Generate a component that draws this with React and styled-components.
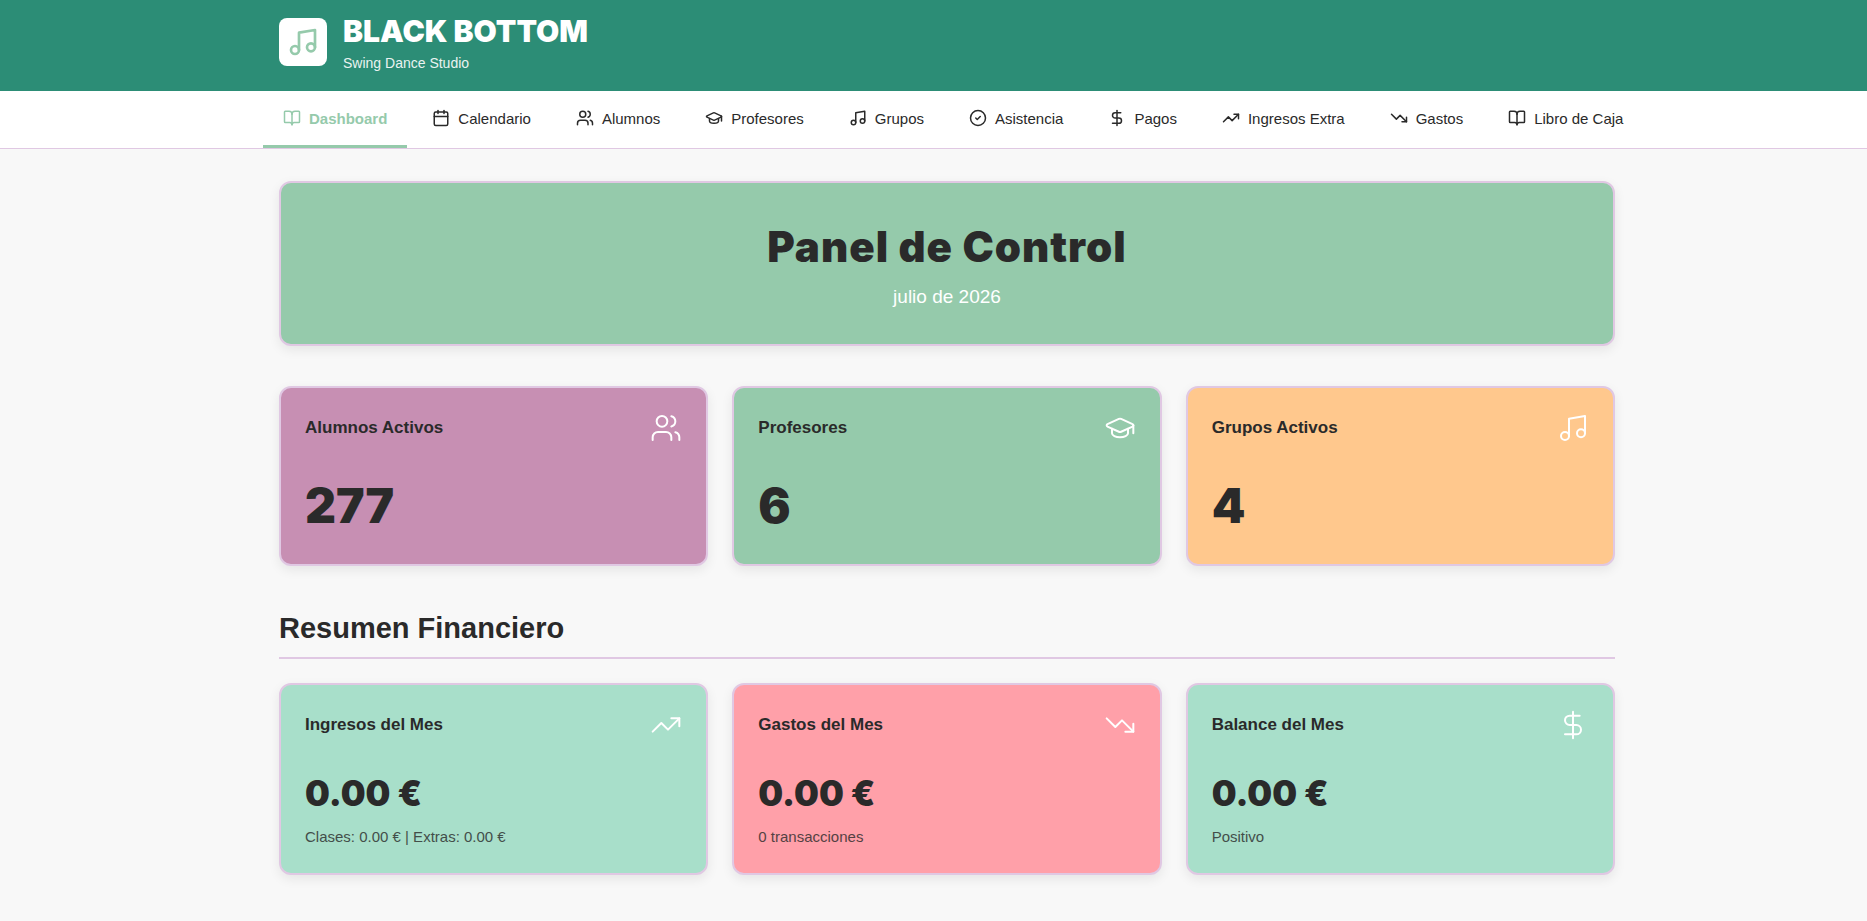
import React from 'react';
import styled, { createGlobalStyle } from 'styled-components';
import {
  BookOpen,
  Calendar,
  CircleCheck,
  DollarSign,
  GraduationCap,
  Music,
  TrendingDown,
  TrendingUp,
  Users,
} from 'lucide-react';

const color = {
  brand: '#2c8d76',
  green: '#95caab',
  purple: '#c78fb3',
  orange: '#ffc88d',
  mint: '#a8dfca',
  pink: '#ffa0a9',
  line: '#e0c8e3',
  ink: '#2a2a2a',
};

const displayFont = "'Arial Black', Inter, 'Liberation Sans', sans-serif";

const GlobalStyle = createGlobalStyle`
  *, *::before, *::after { box-sizing: border-box; }
  body {
    margin: 0;
    background: #f8f8f8;
    color: ${color.ink};
    font-family: 'Liberation Sans', Arial, sans-serif;
    font-size: 15px;
  }
  h1, h2, h3, p { margin: 0; }
`;

const Page = styled.div`
  min-height: 100vh;
`;

const Band = styled.div`
  padding-left: 27px;
`;

const HeaderBand = styled(Band).attrs({ as: 'header' })`
  background: ${color.brand};
`;

const NavBand = styled(Band).attrs({ as: 'nav' })`
  background: #fff;
  border-bottom: 1px solid ${color.line};
`;

const Brand = styled.div`
  display: flex;
  align-items: center;
  gap: 16px;
  max-width: 1400px;
  margin: 0 auto;
  padding: 10px 32px 17px;
  color: #fff;
`;

const Logo = styled.div`
  display: grid;
  place-items: center;
  width: 48px;
  height: 48px;
  border-radius: 8px;
  background: #fff;
  color: ${color.green};
`;

const BrandName = styled.h1`
  font: 900 30px/42px ${displayFont};
`;

const Tagline = styled.p`
  font-size: 14px;
  line-height: 22px;
  opacity: 0.9;
`;

const NavList = styled.div`
  display: flex;
  gap: 5px;
  max-width: 1400px;
  margin: 0 auto;
  padding: 0 16px;
`;

const NavButton = styled.button`
  display: flex;
  align-items: center;
  flex-shrink: 0;
  gap: 8px;
  height: 57px;
  padding: 0 20px;
  border: 0;
  border-bottom: 3px solid ${(p) => (p.$active ? color.green : 'transparent')};
  background: none;
  color: ${(p) => (p.$active ? color.green : color.ink)};
  font-family: inherit;
  font-size: 15px;
  font-weight: ${(p) => (p.$active ? 700 : 400)};
  white-space: nowrap;
  cursor: pointer;
`;

const Main = styled.main`
  max-width: 1400px;
  margin: 0 auto;
  padding: 32px;
`;

const Panel = styled.section`
  border: 2px solid ${color.line};
  border-radius: 12px;
  background: ${(p) => color[p.$tone]};
  box-shadow: 0 4px 12px rgba(0, 0, 0, 0.08);
`;

const Hero = styled(Panel)`
  margin-bottom: 40px;
  padding: 32px;
  text-align: center;
`;

const HeroTitle = styled.h2`
  margin-bottom: 2px;
  font: 900 42px/64px ${displayFont};
  letter-spacing: 1px;
`;

const HeroDate = styled.p`
  color: #fff;
  font-size: 19px;
  line-height: 31px;
`;

const CardGrid = styled.div`
  display: grid;
  grid-template-columns: repeat(3, 1fr);
  gap: 24px;
`;

const Card = styled(Panel)`
  padding: 24px;
`;

const CardHead = styled.div`
  display: flex;
  align-items: center;
  justify-content: space-between;
  margin-bottom: 24px;

  svg { color: #fff; }
`;

const CardTitle = styled.h3`
  font-size: 17px;
  line-height: 32px;
`;

const Count = styled.p`
  padding-top: 4px;
  font: 900 48px/68px ${displayFont};
`;

const Amount = styled.p`
  margin-bottom: 4px;
  font: 900 35px/56px ${displayFont};
`;

const Note = styled.p`
  line-height: 24px;
  opacity: 0.8;
`;

const SectionTitle = styled.h2`
  margin: 40px 0 24px;
  padding-bottom: 7px;
  border-bottom: 2px solid ${color.line};
  font-size: 29px;
  line-height: 44px;
`;

const navItems = [
  ['Dashboard', BookOpen],
  ['Calendario', Calendar],
  ['Alumnos', Users],
  ['Profesores', GraduationCap],
  ['Grupos', Music],
  ['Asistencia', CircleCheck],
  ['Pagos', DollarSign],
  ['Ingresos Extra', TrendingUp],
  ['Gastos', TrendingDown],
  ['Libro de Caja', BookOpen],
];

const counts = [
  { title: 'Alumnos Activos', value: '277', tone: 'purple', Icon: Users },
  { title: 'Profesores', value: '6', tone: 'green', Icon: GraduationCap },
  { title: 'Grupos Activos', value: '4', tone: 'orange', Icon: Music },
];

const finances = [
  { title: 'Ingresos del Mes', value: '0.00 €', note: 'Clases: 0.00 € | Extras: 0.00 €', tone: 'mint', Icon: TrendingUp },
  { title: 'Gastos del Mes', value: '0.00 €', note: '0 transacciones', tone: 'pink', Icon: TrendingDown },
  { title: 'Balance del Mes', value: '0.00 €', note: 'Positivo', tone: 'mint', Icon: DollarSign },
];

function StatCard({ title, tone, Icon, children }) {
  return (
    <Card $tone={tone}>
      <CardHead>
        <CardTitle>{title}</CardTitle>
        <Icon size={32} strokeWidth={1.5} aria-hidden="true" />
      </CardHead>
      {children}
    </Card>
  );
}

export default function App() {
  return (
    <Page>
      <GlobalStyle />
      <HeaderBand>
        <Brand>
          <Logo>
            <Music size={32} aria-hidden="true" />
          </Logo>
          <div>
            <BrandName>BLACK BOTTOM</BrandName>
            <Tagline>Swing Dance Studio</Tagline>
          </div>
        </Brand>
      </HeaderBand>
      <NavBand>
        <NavList>
          {navItems.map(([label, Icon], i) => (
            <NavButton key={label} type="button" $active={i === 0}>
              <Icon size={18} aria-hidden="true" />
              {label}
            </NavButton>
          ))}
        </NavList>
      </NavBand>
      <Band>
        <Main>
          <Hero $tone="green">
            <HeroTitle>Panel de Control</HeroTitle>
            <HeroDate>julio de 2026</HeroDate>
          </Hero>
          <CardGrid>
            {counts.map(({ value, ...card }) => (
              <StatCard key={card.title} {...card}>
                <Count>{value}</Count>
              </StatCard>
            ))}
          </CardGrid>
          <SectionTitle>Resumen Financiero</SectionTitle>
          <CardGrid>
            {finances.map(({ value, note, ...card }) => (
              <StatCard key={card.title} {...card}>
                <Amount>{value}</Amount>
                <Note>{note}</Note>
              </StatCard>
            ))}
          </CardGrid>
        </Main>
      </Band>
    </Page>
  );
}
